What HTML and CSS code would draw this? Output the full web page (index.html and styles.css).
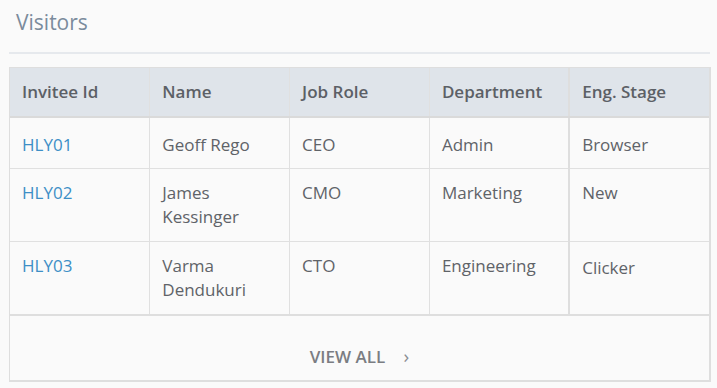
FILE: index.html
```html
<!DOCTYPE html>
<html lang="en">
<head>
<meta charset="utf-8">
<title>Visitors</title>
<link rel="stylesheet" href="styles.css">
</head>
<body>
<section class="card">
  <h2 class="card-title">Visitors</h2>
  <div class="table-wrap">
    <table class="visitors">
      <colgroup>
        <col class="col"><col class="col"><col class="col"><col class="col"><col class="col">
      </colgroup>
      <thead>
        <tr>
          <th>Invitee Id</th>
          <th>Name</th>
          <th>Job Role</th>
          <th>Department</th>
          <th class="stage">Eng. Stage</th>
        </tr>
      </thead>
      <tbody>
        <tr class="first">
          <td><a href="#" class="id-link">HLY01</a></td>
          <td>Geoff Rego</td>
          <td>CEO</td>
          <td>Admin</td>
          <td class="stage">Browser</td>
        </tr>
        <tr>
          <td><a href="#" class="id-link">HLY02</a></td>
          <td>James Kessinger</td>
          <td>CMO</td>
          <td>Marketing</td>
          <td class="stage">New</td>
        </tr>
        <tr>
          <td><a href="#" class="id-link">HLY03</a></td>
          <td>Varma Dendukuri</td>
          <td>CTO</td>
          <td>Engineering</td>
          <td class="stage lower">Clicker</td>
        </tr>
      </tbody>
    </table>
    <div class="footer">
      <a href="#" class="view-all">VIEW ALL <span class="chev">&#8250;</span></a>
    </div>
  </div>
</section>
</body>
</html>
```

FILE: styles.css
```css
html, body {
  margin: 0;
  padding: 0;
  background: #fafafa;
}

body {
  font-family: "Open Sans", "Noto Sans", sans-serif;
  color: #5f6368;
}

.card {
  padding: 0 7px 0 9px;
}

.card-title {
  margin: 0;
  padding: 8px 0 16px 7px;
  font-size: 21px;
  font-weight: 400;
  line-height: 28px;
  color: #7b8b9c;
  border-bottom: 2px solid #e6e9ed;
}

.table-wrap {
  margin-top: 13px;
  width: 702px;
  border: 1px solid #dedede;
  border-right-width: 2px;
  border-bottom-width: 2px;
  box-sizing: border-box;
}

.visitors {
  width: 100%;
  border-collapse: collapse;
  table-layout: fixed;
  font-size: 17px;
  line-height: 24px;
}

.col {
  width: 20%;
}

.visitors th,
.visitors td {
  text-align: left;
  vertical-align: top;
  padding: 12px 12px;
  border-right: 1px solid #e0e0e0;
  border-bottom: 1px solid #e0e0e0;
}

.visitors th:last-child,
.visitors td:last-child {
  border-right: none;
}

.visitors th {
  background: #dfe4ea;
  font-weight: 600;
  color: #5c6066;
  border-bottom: 2px solid #dadada;
}

.visitors th:nth-child(4),
.visitors td:nth-child(4) {
  border-right: 2px solid #dedede;
}

.visitors tr.first td {
  padding-top: 15px;
  padding-bottom: 11px;
}

.visitors td.lower {
  padding-top: 14px;
  padding-bottom: 10px;
}

.visitors tbody tr:last-child td {
  border-bottom: 2px solid #dedede;
}

.id-link {
  color: #3d8fc6;
  text-decoration: none;
}

.footer {
  display: flex;
  justify-content: center;
  padding: 28px 0 11px;
}

.view-all {
  font-size: 17px;
  line-height: 24px;
  font-weight: 600;
  color: #7a7d82;
  text-decoration: none;
}

.chev {
  display: inline-block;
  margin-left: 14px;
  font-weight: 400;
  font-size: 19px;
  color: #8a8d92;
}
```
